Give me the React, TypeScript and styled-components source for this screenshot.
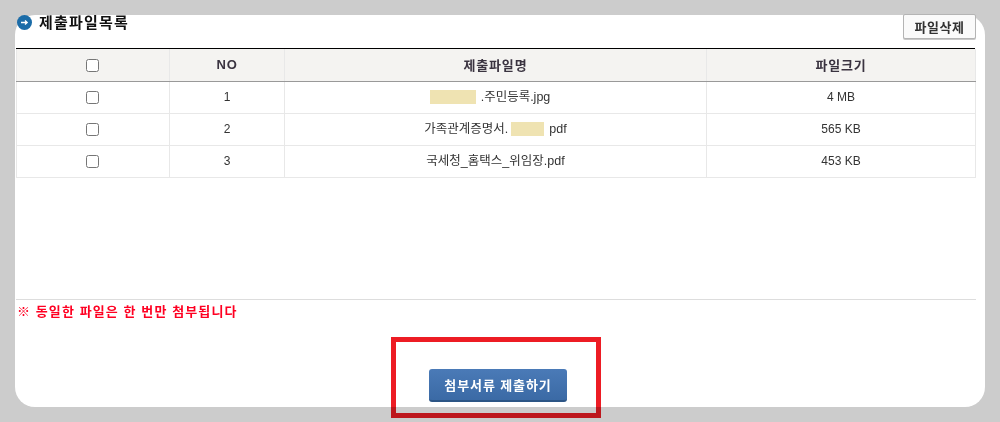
import React from 'react';
import styled, { createGlobalStyle } from 'styled-components';

const files = [
  { id: 1, before: '', mask: 46, after: '.주민등록.jpg', size: '4 MB', trail: 14 },
  { id: 2, before: '가족관계증명서.', mask: 33, after: 'pdf', size: '565 KB', trail: 0 },
  { id: 3, before: '국세청_홈택스_위임장.pdf', mask: 0, after: '', size: '453 KB', trail: 0 },
];

const GlobalStyle = createGlobalStyle`
  html, body {
    margin: 0;
    padding: 0;
    background: #cccccc;
    overflow: hidden;
  }
  body {
    font-family: "Liberation Sans", "Noto Sans CJK KR", sans-serif;
  }
`;

const Page = styled.div`
  position: relative;
  width: 1000px;
  height: 422px;
  padding: 15px;
  box-sizing: border-box;
`;

const Card = styled.div`
  height: 392px;
  background: #ffffff;
  border-radius: 20px;
  padding: 0 9px 0 1px;
  display: flex;
  flex-direction: column;
`;

const TitleRow = styled.div`
  height: 33px;
  display: flex;
  align-items: flex-start;
  justify-content: space-between;
`;

const TitleGroup = styled.div`
  display: flex;
  align-items: center;
  gap: 7px;
  height: 15px;
  padding-left: 1px;
`;

const Title = styled.h2`
  margin: 0;
  font-size: 15px;
  line-height: 15px;
  font-weight: 700;
  color: #111111;
  letter-spacing: 1.2px;
`;

const DeleteButton = styled.button`
  width: 73px;
  height: 25px;
  margin-top: -1px;
  padding: 0;
  background: #fafafa;
  border: 1px solid #b4b4b4;
  border-radius: 2px;
  box-shadow: 0 1px 0 #c8c8c8;
  font-family: inherit;
  font-size: 13px;
  font-weight: 700;
  letter-spacing: 0.5px;
  color: #333333;
`;

const TableWrap = styled.div`
  width: 959px;
  border-top: 1px solid #000000;
`;

const FileTable = styled.table`
  width: 959px;
  border-collapse: collapse;
  table-layout: fixed;
`;

const HeadCell = styled.th`
  height: 32px;
  padding: 0 0 1px;
  background: #f4f3f1;
  border-left: 1px solid #e8e8e8;
  border-right: 1px solid #e8e8e8;
  border-bottom: 1px solid #999999;
  font-size: 13px;
  font-weight: 700;
  letter-spacing: 0.8px;
  color: #3a3340;
  text-align: center;
  box-sizing: border-box;
`;

const BodyCell = styled.td`
  height: 32px;
  padding: 0;
  border: 1px solid #e8e8e8;
  font-size: 12px;
  color: #333333;
  text-align: center;
  box-sizing: border-box;
`;

const NameCell = styled(BodyCell)<{ $trail: number }>`
  padding-right: ${({ $trail }) => $trail}px;
  padding-bottom: 4px;
  font-size: 12.5px;
`;

const Check = styled.input.attrs({ type: 'checkbox' })`
  width: 13px;
  height: 13px;
  margin: 0 2px 0 0;
  vertical-align: middle;
`;

const Mask = styled.span<{ $width: number }>`
  display: inline-block;
  width: ${({ $width }) => $width}px;
  height: 14px;
  margin: 0 5px 0 3px;
  background: #efe3b2;
  vertical-align: middle;
`;

const Spacer = styled.div`
  flex: 1;
`;

const Notice = styled.div`
  height: 34px;
  border-top: 1px solid #dddddd;
  padding: 4px 0 0 1px;
  box-sizing: border-box;
  font-size: 13px;
  line-height: 16px;
  font-weight: 700;
  letter-spacing: 1.1px;
  color: #ff0022;
`;

const Actions = styled.div`
  height: 74px;
  display: flex;
  justify-content: center;
  padding-left: 4px;
  box-sizing: border-box;
`;

const SubmitButton = styled.button`
  width: 138px;
  height: 33px;
  margin-top: 36px;
  padding: 0;
  border: none;
  border-bottom: 2px solid #2c5585;
  border-radius: 3px;
  background: linear-gradient(#4a7ab7, #3b6aa5);
  color: #ffffff;
  font-family: inherit;
  font-size: 13px;
  font-weight: 700;
  letter-spacing: 0.9px;
`;

const Annotation = styled.div`
  position: absolute;
  left: 391px;
  top: 337px;
  width: 210px;
  height: 81px;
  box-sizing: border-box;
  border: 5px solid #ed1c24;
  mix-blend-mode: multiply;
`;

const ArrowBadge = () => (
  <svg width="15" height="15" viewBox="0 0 15 15" aria-hidden="true">
    <circle cx="7.5" cy="7.5" r="7.5" fill="#1b6ca8" />
    <path d="M4 7.5h6M8 5.5l2.2 2-2.2 2" fill="none" stroke="#ffffff" strokeWidth="1.3" />
  </svg>
);

const App: React.FC = () => {
  return (
    <Page>
      <GlobalStyle />
      <Card>
        <TitleRow>
          <TitleGroup>
            <ArrowBadge />
            <Title>제출파일목록</Title>
          </TitleGroup>
          <DeleteButton type="button">파일삭제</DeleteButton>
        </TitleRow>

        <TableWrap>
          <FileTable>
            <colgroup>
              <col width="153" />
              <col width="115" />
              <col width="422" />
              <col width="269" />
            </colgroup>
            <thead>
              <tr>
                <HeadCell>
                  <Check />
                </HeadCell>
                <HeadCell>NO</HeadCell>
                <HeadCell>제출파일명</HeadCell>
                <HeadCell>파일크기</HeadCell>
              </tr>
            </thead>
            <tbody>
              {files.map((file) => (
                <tr key={file.id}>
                  <BodyCell>
                    <Check />
                  </BodyCell>
                  <BodyCell>{file.id}</BodyCell>
                  <NameCell $trail={file.trail}>
                    {file.before}
                    {file.mask > 0 && <Mask $width={file.mask} />}
                    {file.after}
                  </NameCell>
                  <BodyCell>{file.size}</BodyCell>
                </tr>
              ))}
            </tbody>
          </FileTable>
        </TableWrap>

        <Spacer />
        <Notice>※ 동일한 파일은 한 번만 첨부됩니다</Notice>
        <Actions>
          <SubmitButton type="button">첨부서류 제출하기</SubmitButton>
        </Actions>
      </Card>
      <Annotation />
    </Page>
  );
};

export default App;
